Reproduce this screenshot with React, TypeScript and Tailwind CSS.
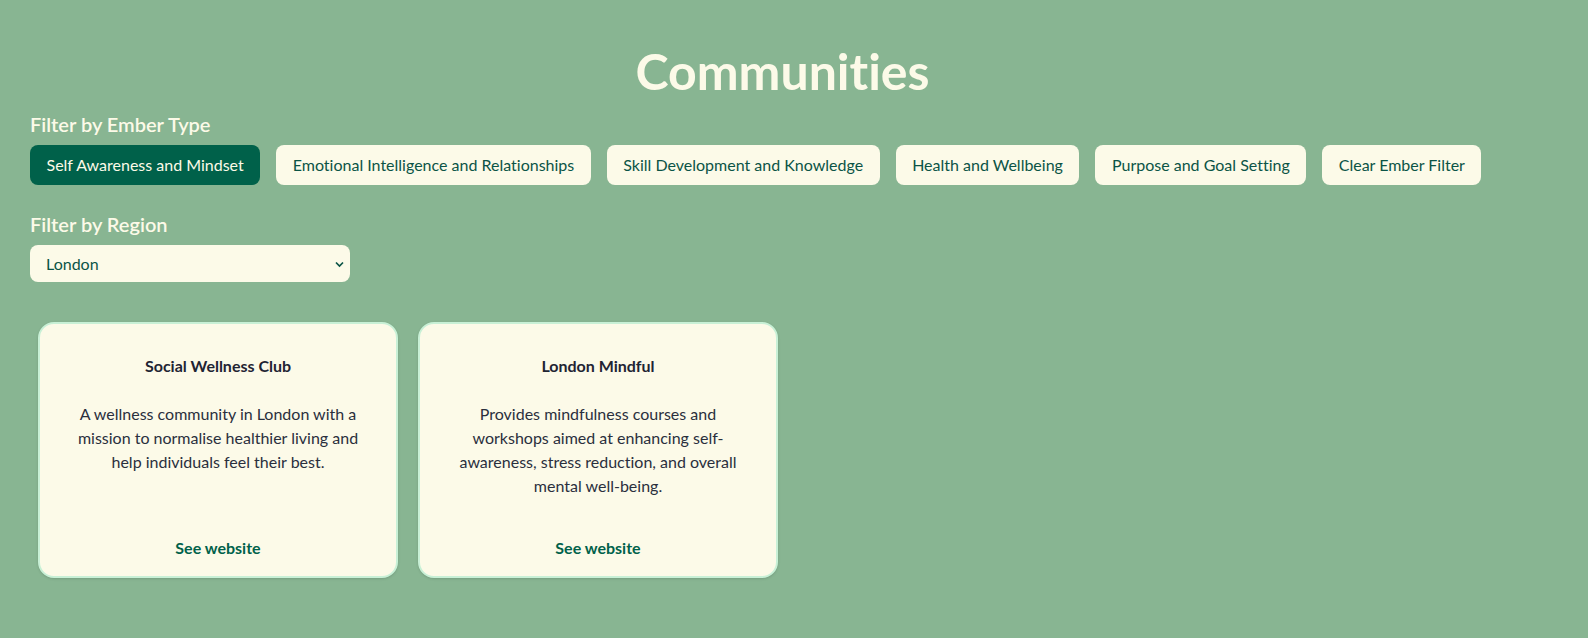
import { useState } from "react";

const EMBER_TYPES = [
  "Self Awareness and Mindset",
  "Emotional Intelligence and Relationships",
  "Skill Development and Knowledge",
  "Health and Wellbeing",
  "Purpose and Goal Setting",
];

const REGIONS = ["London", "Manchester", "Birmingham", "Leeds", "Bristol"];

const COMMUNITIES = [
  {
    name: "Social Wellness Club",
    description:
      "A wellness community in London with a mission to normalise healthier living and help individuals feel their best.",
    url: "#",
  },
  {
    name: "London Mindful",
    description:
      "Provides mindfulness courses and workshops aimed at enhancing self-awareness, stress reduction, and overall mental well-being.",
    url: "#",
  },
];

const App = () => {
  const [ember, setEmber] = useState<string | null>(EMBER_TYPES[0]);
  const [region, setRegion] = useState("London");

  return (
    <div
      className="min-h-screen bg-[#88b592] px-[30px] pb-16 text-[#fcfae8] [font-variant-ligatures:none]"
      style={{ fontFamily: "Lato, 'Noto Sans', sans-serif" }}
    >
      <h1 className="pt-[47px] pr-[23px] text-center text-[50px] leading-[48px] font-bold">
        Communities
      </h1>

      <h2 className="mt-[15px] mb-[7px] text-xl leading-7 font-semibold">Filter by Ember Type</h2>
      <div className="flex flex-wrap gap-4">
        {EMBER_TYPES.map((type) => (
          <button
            key={type}
            onClick={() => setEmber(type)}
            className={
              ember === type
                ? "rounded-lg bg-[#00614a] px-[16.5px] py-2 text-base leading-6 text-[#fcfae8]"
                : "rounded-lg bg-[#fcfae8] px-[16.5px] py-2 text-base leading-6 text-[#0b5446]"
            }
          >
            {type}
          </button>
        ))}
        <button
          onClick={() => setEmber(null)}
          className="rounded-lg bg-[#fcfae8] px-[16.5px] py-2 text-base leading-6 text-[#0b5446]"
        >
          Clear Ember Filter
        </button>
      </div>

      <h2 className="mt-[25px] mb-[7px] text-xl leading-7 font-semibold">Filter by Region</h2>
      <div className="relative w-80">
        <select
          value={region}
          onChange={(e) => setRegion(e.target.value)}
          className="h-[37px] w-full appearance-none rounded-lg bg-[#fcfae8] pl-4 pr-8 text-base text-[#0b5446] outline-none"
        >
          {REGIONS.map((r) => (
            <option key={r} value={r}>
              {r}
            </option>
          ))}
        </select>
        <svg
          className="pointer-events-none absolute top-1/2 right-[5px] -translate-y-1/2"
          width="11"
          height="10"
          viewBox="0 0 11 10"
          fill="none"
          stroke="#0b5446"
          strokeWidth="1.7"
        >
          <path d="M2 3.5 L5.5 7 L9 3.5" />
        </svg>
      </div>

      <div className="mt-10 ml-2 flex flex-wrap gap-5">
        {COMMUNITIES.map((c) => (
          <div
            key={c.name}
            className="flex h-64 w-90 flex-col rounded-2xl border-2 border-[#c8f0d6] bg-[#fcfae8] px-8 pt-[30px] pb-4 text-center shadow-sm"
          >
            <h3 className="text-base leading-6 font-bold text-[#1f2433]">{c.name}</h3>
            <p className="mt-6 text-base leading-6 text-[#2a2f3d]">{c.description}</p>
            <a href={c.url} className="mt-auto text-base leading-6 font-bold text-[#00614a]">
              See website
            </a>
          </div>
        ))}
      </div>
    </div>
  );
};

export default App;
